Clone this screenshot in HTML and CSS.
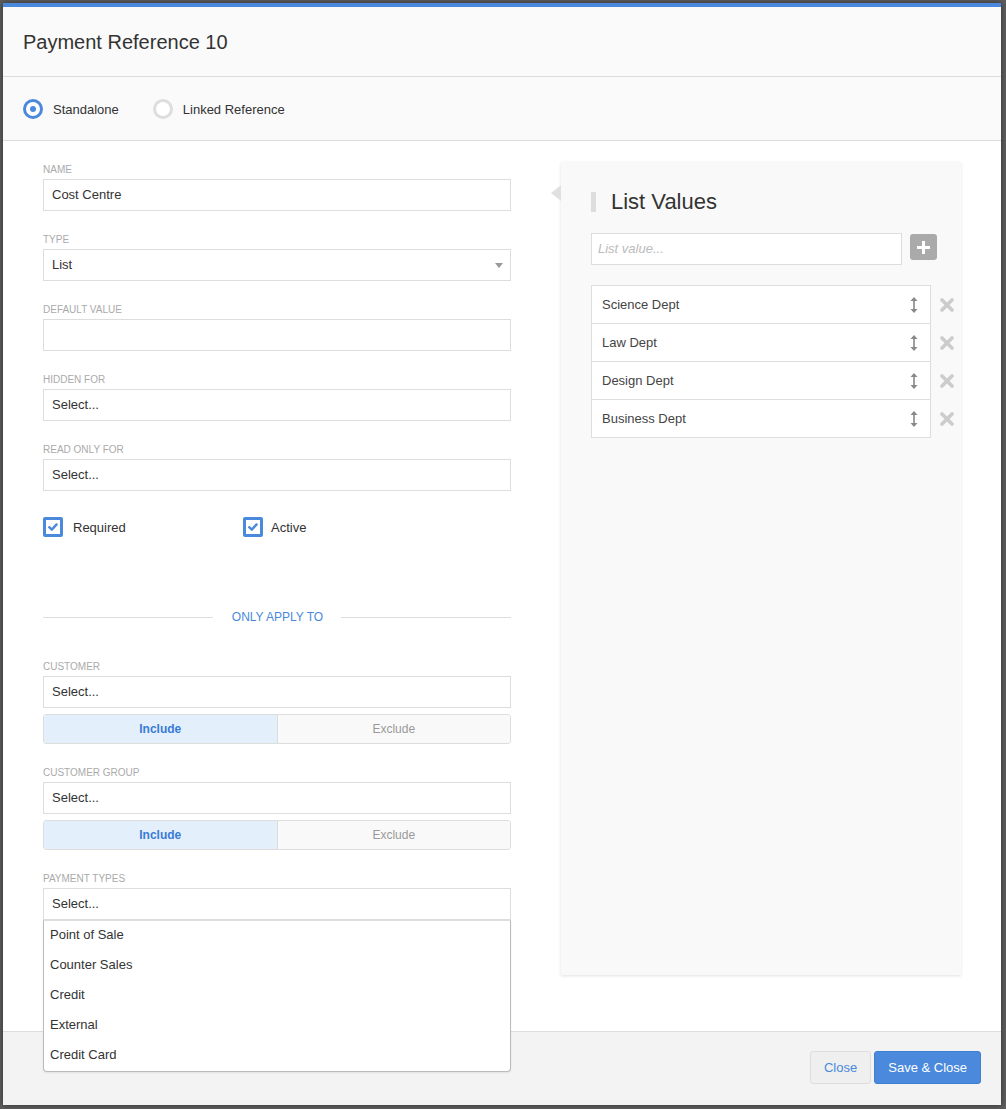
FILE: index.html
```html
<!DOCTYPE html>
<html>
<head>
<meta charset="utf-8">
<title>Payment Reference 10</title>
<link rel="stylesheet" href="styles.css">
</head>
<body>
<div class="modal">
  <div class="modal-header"><h1 class="title">Payment Reference 10</h1></div>
  <div class="mode-bar">
    <label class="radio"><span class="radio-dot on"></span>Standalone</label>
    <label class="radio"><span class="radio-dot"></span>Linked Reference</label>
  </div>
  <div class="modal-body">
    <div class="form-col">
      <div class="field">
        <div class="label">Name</div>
        <div class="input">Cost Centre</div>
      </div>
      <div class="field">
        <div class="label">Type</div>
        <div class="input select">List<span class="caret"></span></div>
      </div>
      <div class="field">
        <div class="label">Default Value</div>
        <div class="input"></div>
      </div>
      <div class="field">
        <div class="label">Hidden For</div>
        <div class="input">Select...</div>
      </div>
      <div class="field">
        <div class="label">Read Only For</div>
        <div class="input">Select...</div>
      </div>
      <div class="checks">
        <label class="check"><span class="box"><svg width="14" height="14" viewBox="0 0 14 14"><path d="M3.2 7.2 L5.8 9.6 L10.6 4.4" fill="none" stroke="#4a89dc" stroke-width="2.4" stroke-linecap="round" stroke-linejoin="round"/></svg></span>Required</label>
        <label class="check"><span class="box"><svg width="14" height="14" viewBox="0 0 14 14"><path d="M3.2 7.2 L5.8 9.6 L10.6 4.4" fill="none" stroke="#4a89dc" stroke-width="2.4" stroke-linecap="round" stroke-linejoin="round"/></svg></span>Active</label>
      </div>
      <div class="divider"><span class="line"></span><span class="divider-text">ONLY APPLY TO</span><span class="line"></span></div>
      <div class="field">
        <div class="label">Customer</div>
        <div class="input">Select...</div>
        <div class="toggle"><span class="opt active">Include</span><span class="opt">Exclude</span></div>
      </div>
      <div class="field">
        <div class="label">Customer Group</div>
        <div class="input">Select...</div>
        <div class="toggle"><span class="opt active">Include</span><span class="opt">Exclude</span></div>
      </div>
      <div class="field">
        <div class="label">Payment Types</div>
        <div class="dd-wrap">
          <div class="input">Select...</div>
          <ul class="dropdown">
            <li>Point of Sale</li>
            <li>Counter Sales</li>
            <li>Credit</li>
            <li>External</li>
            <li>Credit Card</li>
          </ul>
        </div>
      </div>
    </div>
    <div class="list-panel">
      <span class="pointer"></span>
      <h2 class="panel-title">List Values</h2>
      <div class="add-row">
        <div class="input placeholder">List value...</div>
        <span class="plus-btn"><svg width="13" height="13" viewBox="0 0 13 13"><rect x="5" y="0" width="3" height="13" fill="#fff"/><rect x="0" y="5" width="13" height="3" fill="#fff"/></svg></span>
      </div>
      <ul class="values">
        <li><div class="value">Science Dept<svg class="sort" width="8" height="16" viewBox="0 0 8 16"><path d="M4 0 L7.5 4 L0.5 4 Z M4 16 L7.5 12 L0.5 12 Z" fill="#888"/><rect x="3.2" y="3" width="1.6" height="10" fill="#888"/></svg></div><svg class="remove" width="14" height="14" viewBox="0 0 14 14"><path d="M2 2 L12 12 M12 2 L2 12" stroke="#ccc" stroke-width="3.6" stroke-linecap="round"/></svg></li>
        <li><div class="value">Law Dept<svg class="sort" width="8" height="16" viewBox="0 0 8 16"><path d="M4 0 L7.5 4 L0.5 4 Z M4 16 L7.5 12 L0.5 12 Z" fill="#888"/><rect x="3.2" y="3" width="1.6" height="10" fill="#888"/></svg></div><svg class="remove" width="14" height="14" viewBox="0 0 14 14"><path d="M2 2 L12 12 M12 2 L2 12" stroke="#ccc" stroke-width="3.6" stroke-linecap="round"/></svg></li>
        <li><div class="value">Design Dept<svg class="sort" width="8" height="16" viewBox="0 0 8 16"><path d="M4 0 L7.5 4 L0.5 4 Z M4 16 L7.5 12 L0.5 12 Z" fill="#888"/><rect x="3.2" y="3" width="1.6" height="10" fill="#888"/></svg></div><svg class="remove" width="14" height="14" viewBox="0 0 14 14"><path d="M2 2 L12 12 M12 2 L2 12" stroke="#ccc" stroke-width="3.6" stroke-linecap="round"/></svg></li>
        <li><div class="value">Business Dept<svg class="sort" width="8" height="16" viewBox="0 0 8 16"><path d="M4 0 L7.5 4 L0.5 4 Z M4 16 L7.5 12 L0.5 12 Z" fill="#888"/><rect x="3.2" y="3" width="1.6" height="10" fill="#888"/></svg></div><svg class="remove" width="14" height="14" viewBox="0 0 14 14"><path d="M2 2 L12 12 M12 2 L2 12" stroke="#ccc" stroke-width="3.6" stroke-linecap="round"/></svg></li>
      </ul>
    </div>
  </div>
  <div class="modal-footer">
    <button class="btn btn-default">Close</button>
    <button class="btn btn-primary">Save &amp; Close</button>
  </div>
</div>
</body>
</html>
```
FILE: styles.css
```css
* { box-sizing: border-box; }
html, body { margin: 0; }
body {
  background: #5e5e5e;
  padding: 3px 5px 4px 3px;
  font-family: "Liberation Sans", Arial, sans-serif;
  color: #333;
}
.modal {
  width: 998px;
  height: 1102px;
  background: #fff;
  border-top: 4px solid #4a89dc;
  display: flex;
  flex-direction: column;
  box-shadow: 0 0 6px rgba(0,0,0,0.5);
}
.modal-header {
  height: 70px;
  background: #fafafa;
  border-bottom: 1px solid #ddd;
  display: flex;
  align-items: center;
  padding-left: 20px;
  padding-top: 1px;
}
.title {
  margin: 0;
  font-size: 20px;
  font-weight: normal;
  color: #333;
}
.mode-bar {
  height: 64px;
  background: #fafafa;
  border-bottom: 1px solid #ddd;
  display: flex;
  align-items: center;
  padding-left: 20px;
  padding-top: 1px;
  gap: 34px;
}
.radio {
  display: flex;
  align-items: center;
  font-size: 13px;
  color: #333;
}
.radio-dot {
  width: 20px;
  height: 20px;
  border-radius: 50%;
  border: 3px solid #ddd;
  background: #fff;
  margin-right: 10px;
  display: flex;
  align-items: center;
  justify-content: center;
}
.radio-dot.on { border-color: #4a89dc; }
.radio-dot.on::after {
  content: "";
  width: 6px;
  height: 6px;
  border-radius: 50%;
  background: #4a89dc;
}
.modal-body {
  flex: 1;
  display: flex;
  gap: 50px;
  padding: 21px 0 0 40px;
}
.form-col {
  width: 468px;
  flex-shrink: 0;
  padding-top: 1px;
}
.field { margin-bottom: 22px; }
.label {
  font-size: 10px;
  line-height: 12px;
  text-transform: uppercase;
  color: #aaa;
  margin-bottom: 4px;
  padding-top: 1px;
  height: 12px;
}
.input {
  height: 32px;
  border: 1px solid #ddd;
  background: #fff;
  font-size: 13px;
  color: #333;
  padding: 0 8px 2px 8px;
  display: flex;
  align-items: center;
}
.select { position: relative; }
.caret {
  position: absolute;
  right: 7px;
  top: 13px;
  width: 0;
  height: 0;
  border-left: 4px solid transparent;
  border-right: 4px solid transparent;
  border-top: 5px solid #999;
}
.checks {
  display: flex;
  margin-top: 26px;
  height: 20px;
}
.check {
  display: flex;
  align-items: center;
  font-size: 13px;
  color: #333;
  width: 200px;
}
.check:last-child { width: auto; }
.box {
  width: 20px;
  height: 20px;
  border: 3px solid #4a89dc;
  border-radius: 2px;
  margin-right: 10px;
  display: flex;
  align-items: center;
  justify-content: center;
  background: #fff;
}
.check:last-child .box { margin-right: 8px; }
.divider {
  display: flex;
  align-items: center;
  margin-top: 73px;
  margin-bottom: 36px;
  height: 14px;
}
.divider .line {
  flex: 1;
  height: 1px;
  background: #ddd;
}
.divider-text {
  font-size: 12px;
  color: #4a89dc;
  padding: 0 18px 0 19px;
}
.toggle {
  margin-top: 6px;
  height: 30px;
  display: flex;
  border: 1px solid #ddd;
  border-radius: 3px;
  overflow: hidden;
}
.opt {
  flex: 1;
  display: flex;
  align-items: center;
  justify-content: center;
  font-size: 12px;
  color: #999;
  background: #f9f9f9;
}
.opt.active {
  background: #e3f0fc;
  color: #3a7bd5;
  font-weight: bold;
  border-right: 1px solid #ddd;
}
.dd-wrap { position: relative; }
.dropdown {
  position: absolute;
  z-index: 10;
  top: 100%;
  left: 0;
  right: 0;
  margin: 0;
  padding: 0;
  list-style: none;
  background: #fff;
  border: 1px solid #bbb;
  border-top: 1px solid #ddd;
  border-radius: 0 0 4px 4px;
  box-shadow: 0 1px 2px rgba(0,0,0,0.08);
}
.dropdown li {
  height: 30px;
  display: flex;
  align-items: center;
  padding-left: 6px;
  padding-bottom: 3px;
  font-size: 13px;
  color: #333;
}
.list-panel {
  position: relative;
  width: 400px;
  flex-shrink: 0;
  height: 813px;
  background: #f9f9f9;
  box-shadow: 0 1px 3px rgba(0,0,0,0.12);
  padding: 30px 0 0 30px;
}
.pointer {
  position: absolute;
  left: -10px;
  top: 23px;
  width: 0;
  height: 0;
  border-top: 8px solid transparent;
  border-bottom: 8px solid transparent;
  border-right: 10px solid #e0e0e0;
}
.panel-title {
  margin: 0 0 21px 0;
  font-size: 22px;
  font-weight: normal;
  color: #333;
  line-height: 20px;
  border-left: 5px solid #ddd;
  padding-left: 15px;
}
.add-row {
  display: flex;
  align-items: flex-start;
  gap: 8px;
  margin-bottom: 20px;
}
.add-row .input { width: 311px; flex-shrink: 0; }
.placeholder {
  font-style: italic;
  color: #bbb;
  padding-left: 6px;
}
.plus-btn {
  flex-shrink: 0;
  margin-top: 1px;
  width: 27px;
  height: 26px;
  background: #aaa;
  border-radius: 3px;
  display: flex;
  align-items: center;
  justify-content: center;
}
.values {
  margin: 0;
  padding: 0;
  list-style: none;
}
.values li {
  display: flex;
  align-items: center;
}
.value {
  width: 340px;
  flex-shrink: 0;
  height: 38px;
  border: 1px solid #ddd;
  background: #fff;
  display: flex;
  align-items: center;
  justify-content: space-between;
  padding: 0 12px 0 10px;
  font-size: 13px;
  color: #444;
}
.values li + li .value { border-top: none; height: 38px; }
.values li:first-child .value { height: 39px; }
.remove { margin-left: 9px; flex-shrink: 0; }
.modal-footer {
  height: 74px;
  background: #f3f3f3;
  border-top: 1px solid #ddd;
  display: flex;
  justify-content: flex-end;
  align-items: flex-start;
  padding: 19px 20px 0 0;
  gap: 3px;
}
.btn {
  height: 33px;
  padding: 0 13px;
  font-family: "Liberation Sans", Arial, sans-serif;
  font-size: 13px;
  border-radius: 3px;
  border: 1px solid #ddd;
}
.btn-default {
  background: #efefef;
  color: #4a89dc;
}
.btn-primary {
  background: #4a89dc;
  border-color: #3f7fd2;
  color: #fff;
}
```
